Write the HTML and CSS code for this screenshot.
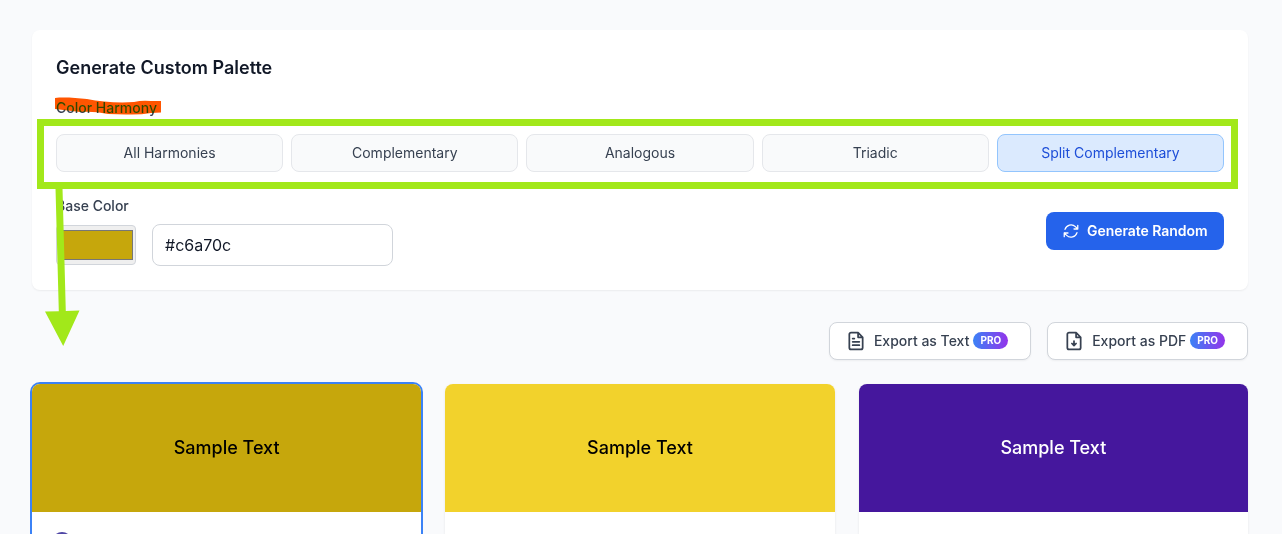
FILE: index.html
```html
<!DOCTYPE html>
<html lang="en">
<head>
<meta charset="utf-8">
<title>Color Palette Generator</title>
<link rel="stylesheet" href="styles.css">
</head>
<body>
<main class="page">
  <section class="panel">
    <h2 class="panel-title">Generate Custom Palette</h2>
    <div class="label harmony-label">Color Harmony</div>
    <div class="harmonies">
      <button class="harmony">All Harmonies</button>
      <button class="harmony">Complementary</button>
      <button class="harmony">Analogous</button>
      <button class="harmony">Triadic</button>
      <button class="harmony active">Split Complementary</button>
    </div>
    <div class="controls">
      <div>
        <div class="label">Base Color</div>
        <div class="inputs">
          <div class="color-well"><div class="color-swatch"></div></div>
          <div class="hex">#c6a70c</div>
        </div>
      </div>
      <button class="generate">
        <svg width="18" height="18" viewBox="0 0 24 24" fill="none" stroke="currentColor" stroke-width="1.7" stroke-linecap="round" stroke-linejoin="round"><path d="M16.023 9.348h4.992M2.985 19.644v-4.992m0 0h4.992m-4.993 0 3.181 3.183a8.25 8.25 0 0 0 13.803-3.7M4.031 9.865a8.25 8.25 0 0 1 13.803-3.7l3.181 3.182m0-4.991v4.99"/></svg>
        <span>Generate Random</span>
      </button>
    </div>
  </section>

  <div class="exports">
    <button class="export">
      <svg width="20" height="20" viewBox="0 0 24 24" fill="none" stroke="currentColor" stroke-width="2.1" stroke-linecap="round" stroke-linejoin="round"><path d="M14.500 2H6a2 2 0 0 0-2 2v16a2 2 0 0 0 2 2h12a2 2 0 0 0 2-2V7.500zM14.500 2v5.500H20M16 13H8M16 17H8M10 9H8"/></svg>
      <span>Export as Text</span><span class="pro">PRO</span>
    </button>
    <button class="export">
      <svg width="20" height="20" viewBox="0 0 24 24" fill="none" stroke="currentColor" stroke-width="2.1" stroke-linecap="round" stroke-linejoin="round"><path d="M14.500 2H6a2 2 0 0 0-2 2v16a2 2 0 0 0 2 2h12a2 2 0 0 0 2-2V7.500zM14.500 2v5.500H20M12 17.500V12M9.500 15l2.500 2.500 2.500-2.500"/></svg>
      <span>Export as PDF</span><span class="pro">PRO</span>
    </button>
  </div>

  <div class="cards">
    <article class="card selected">
      <div class="sample gold">Sample Text</div>
      <div class="card-body"><span class="dot"></span></div>
    </article>
    <article class="card"><div class="sample yellow">Sample Text</div><div class="card-body"></div></article>
    <article class="card"><div class="sample purple">Sample Text</div><div class="card-body"></div></article>
  </div>
</main>

<svg class="annotations marker-layer" width="1282" height="534" viewBox="0 0 1282 534">
  <path class="marker" d="M55 98C64 97 76 98 87 99C101 102 119 103 134 102Q142 100 151 101L161 101V112.500L151 113Q140 115 126 114.500L108 114Q94 111 80 112L55 109Z"/>
</svg>
<svg class="annotations" width="1282" height="534" viewBox="0 0 1282 534">
  <rect class="frame" x="40.500" y="122.500" width="1194" height="63"/>
  <path class="arrow" d="M55.500 188H62.500L65.800 311L79.500 310.500L63.200 346L45 311.500L58.800 311.200Z"/>
</svg>
</body>
</html>
```

FILE: styles.css
```css
* { box-sizing: border-box; }
body {
  margin: 0;
  height: 534px;
  overflow: hidden;
  background: #f9fafc;
  color: #111827;
  font-family: Inter, "Liberation Sans", sans-serif;
}
button { font: inherit; margin: 0; }
.page { width: 1280px; height: 534px; padding: 30px 32px 0; overflow: hidden; }
.panel {
  height: 260px;
  padding: 24px;
  background: #fff;
  border-radius: 8px;
  box-shadow: 0 1px 2px rgba(0, 0, 0, .06);
}
.panel-title { margin: 0; font-size: 18px; line-height: 28px; font-weight: 600; }
.label { font-size: 14px; line-height: 20px; font-weight: 500; color: #374151; }
.harmony-label { margin-top: 16px; }
.harmonies { display: grid; grid-template-columns: repeat(5, 1fr); gap: 8px; margin-top: 16px; }
.harmony {
  height: 38px;
  padding: 0 0 2px;
  border: 1px solid #e5e7eb;
  border-radius: 8px;
  background: #f9fafb;
  color: #374151;
  font-size: 14px;
}
.harmony.active { background: #dbeafe; border-color: #93c5fd; color: #1d4ed8; }
.controls { display: flex; justify-content: space-between; align-items: center; margin-top: 24px; }
.inputs { display: flex; align-items: center; gap: 16px; margin-top: 8px; }
.color-well {
  width: 80px;
  height: 40px;
  padding: 5px 2px 5px 3px;
  background: #efefef;
  border: 1px solid #d1d5db;
  border-radius: 4px;
}
.color-swatch { height: 30px; margin-top: -1px; border: 1px solid #777; background: #c6a70c; }
.hex {
  width: 241px;
  height: 42px;
  padding: 0 12px;
  border: 1px solid #d1d5db;
  border-radius: 8px;
  font-size: 16px;
  line-height: 41px;
}
.generate {
  display: flex;
  align-items: center;
  gap: 7px;
  width: 178px;
  height: 38px;
  padding: 0 16px;
  border: 0;
  border-radius: 8px;
  background: #2563eb;
  color: #fff;
  font-size: 14px;
  font-weight: 600;
  letter-spacing: -.05px;
  white-space: nowrap;
}
.generate span { padding-bottom: 2px; }
.exports { display: flex; justify-content: flex-end; gap: 16px; margin-top: 32px; }
.export {
  display: flex;
  align-items: center;
  height: 38px;
  padding: 0 22px 0 16px;
  border: 1px solid #d1d5db;
  border-radius: 8px;
  background: #fff;
  box-shadow: 0 1px 2px rgba(0, 0, 0, .05);
  color: #374151;
  font-size: 14px;
  font-weight: 500;
}
.export svg { margin-right: 8px; }
.export span { margin-bottom: 2px; }
.export .pro {
  height: 17px;
  margin: 0 0 1px 4px;
  padding: 0 7px;
  border-radius: 9px;
  background: linear-gradient(90deg, #3b82f6, #9333ea);
  color: #fff;
  font-size: 10px;
  line-height: 16px;
  font-weight: 700;
}
.cards { display: grid; grid-template-columns: repeat(3, 1fr); gap: 24px; margin-top: 24px; }
.card { border-radius: 8px 8px 0 0; background: #fff; overflow: hidden; box-shadow: 0 1px 3px rgba(0, 0, 0, .08); }
.card.selected { box-shadow: 0 0 0 2px #3b82f6; }
.sample { display: flex; align-items: center; justify-content: center; height: 128px; padding-bottom: 2px; font-size: 18px; font-weight: 500; color: #000; }
.gold { background: #c6a70c; }
.yellow { background: #f2d22c; }
.purple { background: #45179d; color: #fff; }
.card-body { height: 22px; padding: 20px 20px 0; overflow: hidden; }
.dot { display: block; width: 20px; height: 20px; border: 2px solid #4f46a5; border-radius: 50%; background: #6366b1; }
.annotations { position: absolute; top: 0; left: 0; pointer-events: none; }
.marker-layer { mix-blend-mode: darken; }
.marker { fill: #ff5500; }
.frame { fill: none; stroke: #a2e81a; stroke-width: 7; }
.arrow { fill: #a2e81a; }
```
